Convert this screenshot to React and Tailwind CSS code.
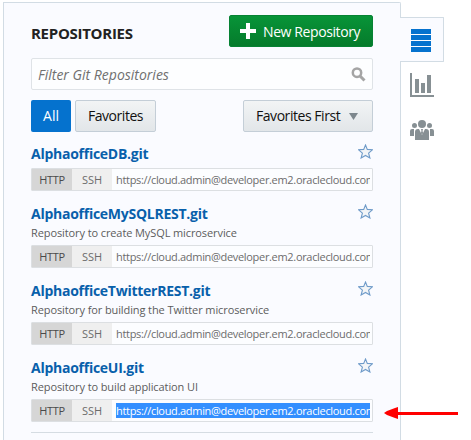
const repos = [
  { name: 'AlphaofficeDB.git' },
  { name: 'AlphaofficeMySQLREST.git', description: 'Repository to create MySQL microservice' },
  { name: 'AlphaofficeTwitterREST.git', description: 'Repository for building the Twitter microservice' },
  { name: 'AlphaofficeUI.git', description: 'Repository to build application UI', selected: true },
];

function Star() {
  return (
    <svg className="mt-px h-[15px] w-[15px] shrink-0" viewBox="0 0 15 15" fill="#f3f5f7" stroke="#6f9bc9" strokeWidth="1.1">
      <path d="M7.5 1 9.3 5.4 14.3 5.8 10.6 9.2 11.9 14 7.5 11.5 3.1 14 4.4 9.2.7 5.8 5.7 5.4Z" />
    </svg>
  );
}

function Repo({ name, description, selected }) {
  return (
    <li className={description ? 'h-[77px]' : 'h-[60px]'}>
      <div className="flex h-[17px] justify-between">
        <a className="text-[14px] leading-[21px] font-bold tracking-[-0.26px] whitespace-nowrap text-[#0860ab]">{name}</a>
        <Star />
      </div>
      {description && (
        <p className="mt-1 -mb-px h-[14px] text-[11px] leading-[17px] tracking-[-0.1px] whitespace-nowrap text-[#5c5c5c]">{description}</p>
      )}
      <div className="mt-[8px] flex h-[23px] w-[342px] rounded-[1px] border border-[#dcdfe2] bg-[#fcfdff] text-[11px] leading-[22px]">
        <span className="w-10 bg-[#d6d6d6] text-center tracking-[-0.3px] text-[#4a4a4a]">HTTP</span>
        <span className="w-10 bg-[#efefef] text-center text-[#6c6c6c]">SSH</span>
        <div className="mt-[3px] ml-1 h-[15px] w-[254px] overflow-hidden tracking-[-0.32px] whitespace-nowrap">
          <span className={selected ? 'block bg-[#338fff] leading-4 text-white' : 'block leading-4 text-[#6c6c6c]'}>
            https://cloud.admin@developer.em2.oraclecloud.com
          </span>
        </div>
      </div>
    </li>
  );
}

function People() {
  return (
    <svg className="h-[20px] w-6" viewBox="0 0 24 20" fill="#879094">
      <circle cx="12" cy="4" r="4" />
      <circle cx="4.5" cy="5.5" r="2.5" />
      <circle cx="19.5" cy="5.5" r="2.5" />
      <path d="M5 20V12Q5 9 8 9H9L12 15 15 9H16Q19 9 19 12V20ZM0 16V11Q0 9 2 9H4V16ZM20 16V9H22Q24 9 24 11V16Z" />
      <path d="m11 9h2l-.5 2 .6 2L12 15l-1.1-2 .6-2Z" />
    </svg>
  );
}

export default function App() {
  return (
    <div className="flex h-[440px] w-[471px] overflow-hidden bg-white pt-[2px] pl-[3px] font-['Open_Sans','Noto_Sans',sans-serif]">
      <main className="h-[440px] w-[398px] shrink-0 rounded-tr-[2px] border-t border-r border-l border-[#d2dce4] bg-[#fafbff] pt-3 pl-[27px]">
        <div className="w-[342px]">
          <header className="flex h-8 justify-between">
            <h1 className="text-[15px] leading-[37px] font-bold tracking-[-0.28px] text-[#222]">REPOSITORIES</h1>
            <button className="flex w-36 items-center rounded-[2px] border border-[#078234] bg-linear-to-b from-[#089438] to-[#057b2b] pl-[10px] text-[14px] text-white">
              <svg className="mr-[7px] h-4 w-4 shrink-0" viewBox="0 0 16 16" fill="white"><path d="M6 0h4v6h6v4h-6v6H6v-6H0V6h6Z" /></svg>
              <span className="tracking-[-0.4px] whitespace-nowrap">New Repository</span>
            </button>
          </header>
          <div className="mt-[11px] flex h-8 items-center justify-between rounded-[2px] border border-[#dfe3e7] bg-[#fdfeff] pr-[6px] pl-[6px]">
            <span className="text-[14px] text-[#707070] italic">Filter Git Repositories</span>
            <svg className="h-[15px] w-[15px]" viewBox="0 0 15 15" fill="none" stroke="#a5a5a5">
              <circle cx="6" cy="5.7" r="4.2" strokeWidth="2.5" /><path d="m9 9 4.5 4.5" strokeWidth="3" />
            </svg>
          </div>
          <div className="mt-[10px] flex h-8 text-[14px] leading-[30px]">
            <button className="w-10 rounded-[2px] bg-[#0572ce] text-white">All</button>
            <button className="ml-1 w-[81px] rounded-[2px] border border-[#c4ced7] bg-linear-to-b from-[#f2f4f5] to-[#e2e6e9] tracking-[-0.45px] text-[#111]">Favorites</button>
            <button className="ml-auto flex w-[130px] items-center justify-between rounded-[2px] border border-[#c4ced7] bg-linear-to-b from-[#f2f4f5] to-[#e2e6e9] pr-[14px] pl-3 text-[#111]">
              <span className="tracking-[-0.45px] whitespace-nowrap">Favorites First</span>
              <svg className="mt-px h-[7px] w-[9px]" viewBox="0 0 9 7" fill="#7d878d"><path d="M0 0h9L4.5 7Z" /></svg>
            </button>
          </div>
          <ul className="mt-[11px]">
            {repos.map((repo) => <Repo key={repo.name} {...repo} />)}
          </ul>
          <div className="-mt-[2px] h-px bg-[#d5dce2]" />
        </div>
      </main>
      <aside className="-ml-px flex w-[71px] flex-col">
        <div className="mt-[15px] h-[45px] w-11 rounded-r-[1px] border-y border-r border-[#d2dce4] bg-[#fafbff] pt-[11px] pl-[11px]">
          <svg className="h-[23px] w-5" viewBox="0 0 20 23" fill="#0572ce"><path d="M0 0h20v5H0ZM0 6h20v5H0ZM0 12h20v5H0ZM0 18h20v5H0Z" /></svg>
        </div>
        <svg className="mt-[11px] ml-[10px] h-6 w-6 shrink-0" viewBox="0 0 24 24" fill="#879094"><path d="M0 0h2v22h22v2H0ZM5 6h4v14H5ZM11 10h4v10h-4ZM17 2h4v18h-4Z" /></svg>
        <div className="mt-[23px] ml-[10px] h-5"><People /></div>
      </aside>
      <svg className="absolute top-[407px] left-[383px] h-3 w-[77px]" viewBox="0 0 77 12" fill="#f00">
        <path d="M1 6 4 4 12 1 15 0V5H75V8H15V12L12 11 4 8Z" />
      </svg>
    </div>
  );
}
